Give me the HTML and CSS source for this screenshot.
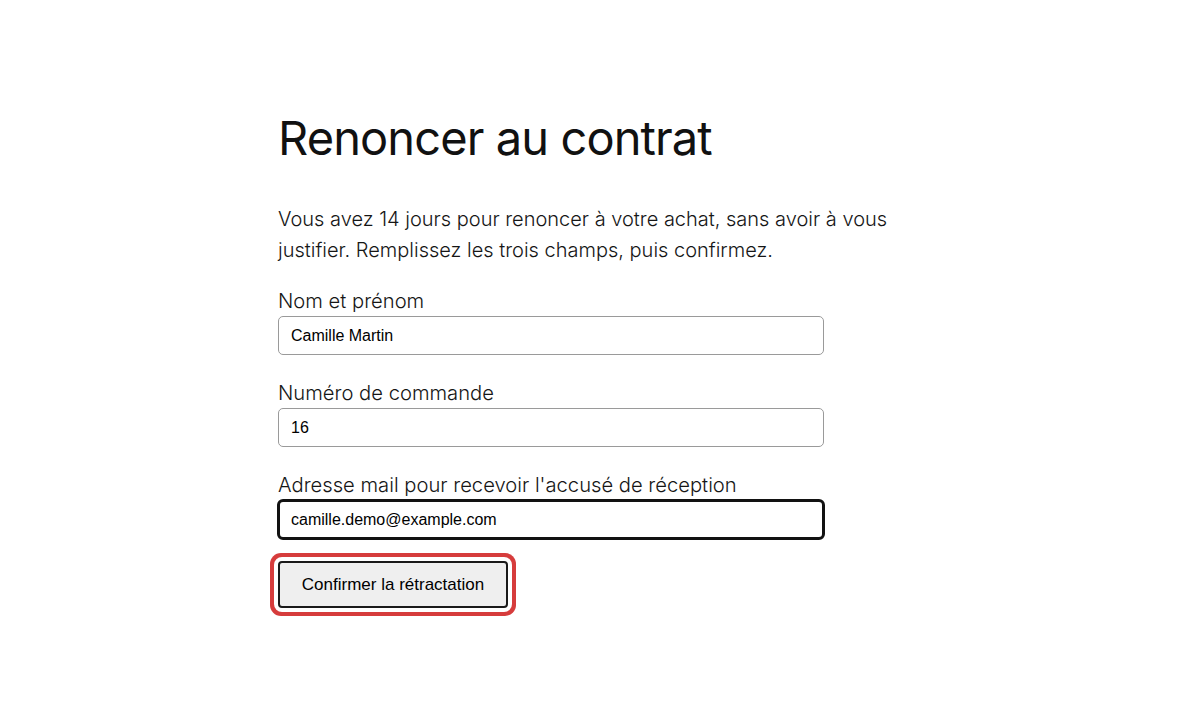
FILE: index.html
```html
<!DOCTYPE html>
<html lang="fr">
<head>
<meta charset="utf-8">
<title>Renoncer au contrat</title>
<link rel="stylesheet" href="styles.css">
</head>
<body>
<main class="page">
  <h1 class="title">Renoncer au contrat</h1>
  <p class="intro">Vous avez 14 jours pour renoncer à votre achat, sans avoir à vous justifier. Remplissez les trois champs, puis confirmez.</p>
  <form class="form">
    <div class="field">
      <label class="label" for="nom">Nom et prénom</label>
      <input class="input" id="nom" type="text" value="Camille Martin">
    </div>
    <div class="field">
      <label class="label" for="cmd">Numéro de commande</label>
      <input class="input" id="cmd" type="text" value="16">
    </div>
    <div class="field">
      <label class="label" for="mail">Adresse mail pour recevoir l'accusé de réception</label>
      <input class="input input-focus" id="mail" type="email" value="camille.demo@example.com">
    </div>
    <button class="submit" type="button">Confirmer la rétractation</button>
  </form>
</main>
</body>
</html>
```

FILE: styles.css
```css
html, body {
  margin: 0;
  padding: 0;
  background: #ffffff;
}

body {
  font-family: Inter, "Noto Sans", sans-serif;
  color: #1a1a1a;
  min-height: 720px;
}

.page {
  width: 644px;
  margin: 0 auto;
  padding: 107px 0 80px;
}

.title {
  margin: 0;
  font-size: 47px;
  font-weight: 400;
  line-height: 62px;
  color: #111111;
  letter-spacing: -0.9px;
}

.intro {
  margin: 35px 0 0;
  font-size: 20px;
  font-weight: 300;
  line-height: 31px;
  color: #161616;
}

.form {
  margin-top: 21px;
  display: flex;
  flex-direction: column;
  align-items: flex-start;
}

.field {
  display: flex;
  flex-direction: column;
  align-items: flex-start;
  margin-bottom: 24px;
}

.field:last-of-type {
  margin-bottom: 22px;
}

.label {
  font-size: 20.2px;
  font-weight: 300;
  line-height: 28px;
  color: #161616;
  margin-bottom: 1px;
}

.input {
  box-sizing: border-box;
  width: 546px;
  height: 39px;
  padding: 0 12px;
  border: 1px solid #9a9a9a;
  border-radius: 5px;
  font-family: Arial, "Liberation Sans", sans-serif;
  font-size: 16px;
  color: #000000;
  background: #ffffff;
}

.input-focus {
  outline: 3px solid #121212;
  outline-offset: -2px;
}

.submit {
  box-sizing: border-box;
  width: 230px;
  height: 47px;
  border: 2px solid #1a1a1a;
  border-radius: 4px;
  background: #efefef;
  font-family: Arial, "Liberation Sans", sans-serif;
  font-size: 17px;
  color: #000000;
  outline: none;
  box-shadow: 0 0 0 4px #ffffff, 0 0 0 8px #d63c3c;
  cursor: pointer;
}
```
